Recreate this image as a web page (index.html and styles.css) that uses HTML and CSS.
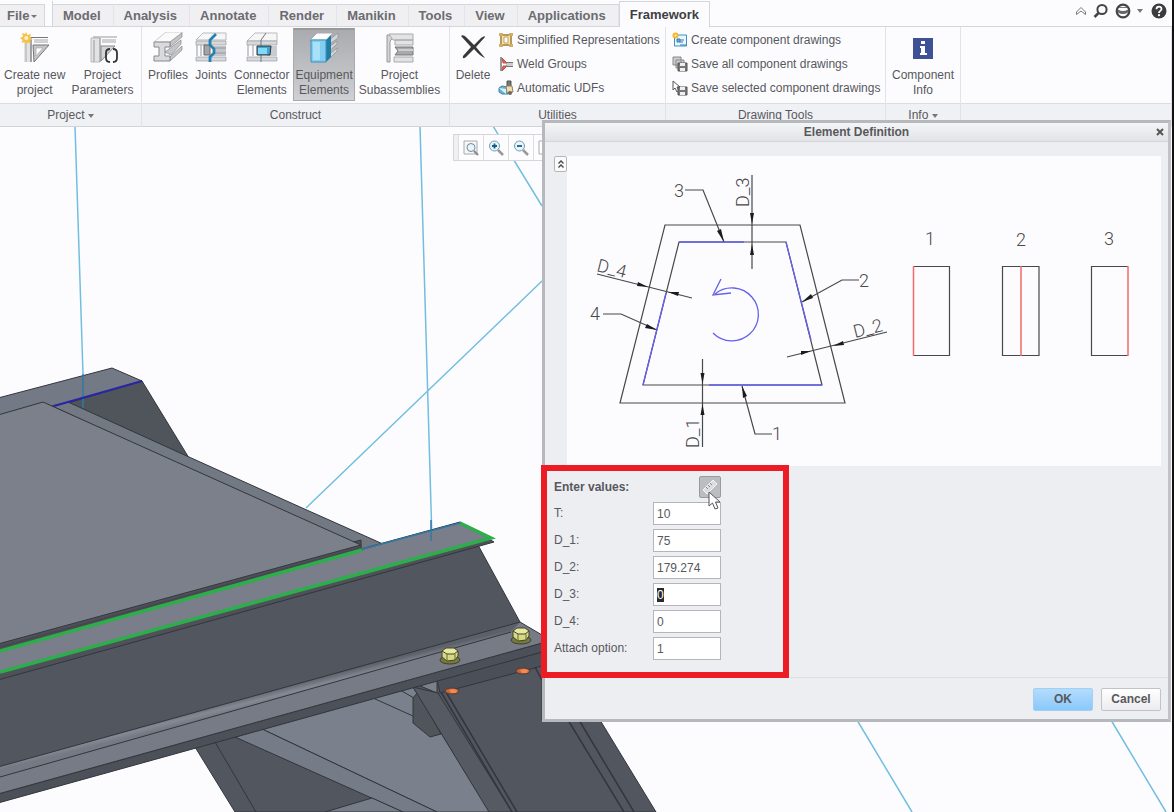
FILE: index.html
```html
<!DOCTYPE html>
<html lang="en">
<head>
<meta charset="utf-8">
<title>Framework - Element Definition</title>
<link rel="stylesheet" href="styles.css">
</head>
<body>
<header class="ribbon">
  <div class="tabbar">
    <button class="file-tab">File <span class="caret"></span></button>
    <nav class="tabs">
      <button class="tab">Model</button>
      <button class="tab">Analysis</button>
      <button class="tab">Annotate</button>
      <button class="tab">Render</button>
      <button class="tab">Manikin</button>
      <button class="tab">Tools</button>
      <button class="tab">View</button>
      <button class="tab">Applications</button>
      <button class="tab active">Framework</button>
    </nav>
    <div class="quick">
      <button class="plain" aria-label="Minimize ribbon"><svg width="12" height="10" viewBox="0 0 12 10"><path d="M1.500 6 6 1.500 10.500 6V8.500L6 5 1.500 8.500Z" fill="#fff" stroke="#777"/></svg></button>
      <button class="plain" aria-label="Search"><svg width="16" height="16" viewBox="0 0 16 16"><circle cx="9" cy="6.500" r="4.600" fill="none" stroke="#444" stroke-width="2"/><path d="M5.500 10 1.500 14" stroke="#444" stroke-width="2.500"/></svg></button>
      <button class="plain" aria-label="Learning connector"><svg width="16" height="16" viewBox="0 0 16 16"><circle cx="8" cy="8" r="6.300" fill="#fff" stroke="#444" stroke-width="2.200"/><path d="M3 6.500q5 3 10 0v3q-5 3-10 0z" fill="#666"/><path d="M4 4.500h8" stroke="#777"/></svg></button>
      <span class="caret"></span>
      <button class="plain help" aria-label="Help"><svg width="16" height="16" viewBox="0 0 16 16"><circle cx="8" cy="8" r="7.500" fill="#3c3c3e"/><path d="M5.500 6.200C5.500 2.800 10.600 3 10.500 6 10.500 8 8 7.800 8 10" fill="none" stroke="#fff" stroke-width="1.800"/><circle cx="8" cy="12.200" r="1.100" fill="#fff"/></svg></button>
    </div>
  </div>

  <div class="groups">
    <section class="group">
      <div class="tools project">
        <button class="tool"><svg class="ico" viewBox="0 0 32 32"><path d="M5 7h7v23H5z" fill="#e2e3e5"/><path d="M7 7v23M12 7v23" stroke="#aaa"/><path d="M12 5v25M12 5.500h17" stroke="#777" fill="none"/><path d="M15 7h14v4H15z" fill="#d0d1d4"/><path d="M14 13h16L15 30z" fill="#c4c5c8" stroke="#777"/><path d="M17 16v8l7-8z" fill="#fff" stroke="#aaa" stroke-width=".7"/><path d="m7 0 1.500 3L12 2l-1 3.500 3 1.500-3 1.500 1 3-3.500-1L7 13l-1.500-3-3 1 1-3L1 6l3-1.500L3 1l3 1z" fill="#f6c14d"/><circle cx="7.300" cy="6" r="2" fill="#fff4c8"/></svg><span>Create new<br>project</span></button>
        <button class="tool"><svg class="ico" viewBox="0 0 32 32"><path d="M5 6h9v24H5z" fill="#e2e3e5" stroke="#bbb"/><path d="M7 5h24M14 6v24M8 8v22" stroke="#999"/><path d="M16 7h14v4H16z" fill="#d0d1d4"/><path d="M15 14h14L15 29z" fill="#d4d5d8" stroke="#888"/><path d="M24 17q-4 0-4 4v5q0 4 4 4M27 17q4 0 4 4v5q0 4-4 4" fill="none" stroke="#333" stroke-width="1.800"/></svg><span>Project<br>Parameters</span></button>
      </div>
      <h2>Project <span class="caret"></span></h2>
    </section>

    <section class="group">
      <div class="tools construct">
        <button class="tool"><svg class="ico" viewBox="0 0 32 32"><path d="M2 10 14 0h17L18 10z" fill="#fafafa" stroke="#ccc"/><path d="m18 10 12-9v4L18 15zM13 20 29 8v4L19 23zM18 25 30 14v4L18 29z" fill="#c3c5c9" stroke="#888" stroke-width=".7"/><path d="M2 10h16v5h-5v9h5v5H2v-5h5v-9H2z" fill="#d9dadd" stroke="#888"/></svg><span>Profiles</span></button>
        <button class="tool"><svg class="ico" viewBox="0 0 32 32"><path d="M1 8 8 1h23v7z" fill="#f6f6f6" stroke="#bbb"/><path d="M1 9h30v4H1zM1 25h30v4H1z" fill="#d6d8dc" stroke="#9a9da2" stroke-width=".7"/><path d="M18 14h13v10H18z" fill="#c2c5ca"/><path d="M18 16h13M18 21h13M6 13v11M2 13v11" stroke="#999"/><path d="M9 13h6v10H9z" fill="#a3a5a8" stroke="#666"/><path d="m21 2-6 6v5l4 4v4l-4 4v5" fill="none" stroke="#2382b2" stroke-width="2.800"/></svg><span>Joints</span></button>
        <button class="tool"><svg class="ico" viewBox="0 0 32 32"><path d="m1 9 8-8h22v8z" fill="#f6f6f6" stroke="#bbb"/><path d="M1 9h30v4H1zM1 25h30v4H1z" fill="#d6d8dc" stroke="#9a9da2" stroke-width=".7"/><path d="M21 14h10v10H21z" fill="#c9cbd0"/><path d="M2 13v11M7 13v11" stroke="#999"/><path d="m20 1-5 7v22" fill="none" stroke="#777"/><path d="M11 14h14l-1 9H11z" fill="#40a2d0" stroke="#333"/><path d="M12 16h9v6h-9z" fill="#80d8fa"/></svg><span>Connector<br>Elements</span></button>
        <button class="tool selected"><svg class="ico" viewBox="0 0 32 32"><path d="m16 12 14-11v5L19 14zM17 18 29 9v3L18 22zM18 25l11-9v3L19 29z" fill="#d2d4d7" stroke="#888" stroke-width=".6"/><path d="m2 8 7-7h16l-6 7z" fill="#fff" stroke="#aaa"/><path d="m18 8 5-5v22l-5 5z" fill="#217ca4"/><path d="M3 8h15v22H3z" fill="#84cdf0" stroke="#3793bb"/><path d="M5 10h7v18H5z" fill="#a8e0fa"/></svg><span>Equipment<br>Elements</span></button>
        <button class="tool"><svg class="ico" viewBox="0 0 32 32"><path d="M4 3h9L7 9v21H4z" fill="#d4d5d8" stroke="#999"/><path d="M6 2h24v6H10zM12 8h18v5H12zM11 25h19v5H11z" fill="#e2e3e5" stroke="#aaa"/><path d="M12 15h18v8H12l3-4z" fill="#a8a9ac" stroke="#777"/><path d="M15 17h15v2H15z" fill="#cdced0"/></svg><span>Project<br>Subassemblies</span></button>
      </div>
      <h2>Construct</h2>
    </section>

    <section class="group">
      <div class="tools">
        <button class="tool"><svg class="ico" viewBox="0 0 32 32"><path d="M4 4q2-2 5 1l8 8 7-7q4-3 4-1l-9 10 9 11q-4-1-11-9l-8 8q-4 3-3-1l8-9z" fill="#37373a"/></svg><span>Delete</span></button>
        <div class="list">
          <button class="row"><svg class="sm" viewBox="0 0 16 16"><path d="M3 3h10v10H3z" fill="#f8e5ae" stroke="#b99a55" stroke-width="2"/><path d="M1 1h4v3H1zM11 1h4v3h-4zM1 12h4v3H1zM11 12h4v3h-4z" fill="#cdb06c"/><path d="M6 5h4v6H6z" fill="#fff" stroke="#bda066"/></svg>Simplified Representations</button>
          <button class="row"><svg class="sm" viewBox="0 0 16 16"><path d="M3 1v14" stroke="#999" stroke-width="2"/><path d="M8 6.500h7M8 10.500h7" stroke="#777"/><path d="M8 7h7v3H8z" fill="#ccc"/><path d="m4 2 5 5H5zM4 15l5-5H5z" fill="#e55f55" stroke="#b55"/></svg>Weld Groups</button>
          <button class="row"><svg class="sm" viewBox="0 0 16 16"><path d="m1 8 3-2 6 1v7H4L1 12z" fill="#66b5df" stroke="#477d9d"/><path d="m1 8 7 1v5" fill="#d8f1fc"/><path d="M9 1h4v6H9z" fill="#777" stroke="#555"/><path d="M8 6h6l1 6-6 1z" fill="#f3dda6" stroke="#8d8166"/><circle cx="12" cy="13" r="2" fill="#666"/></svg>Automatic UDFs</button>
        </div>
      </div>
      <h2>Utilities</h2>
    </section>

    <section class="group">
      <div class="tools">
        <div class="list">
          <button class="row"><svg class="sm" viewBox="0 0 16 16"><path d="M2.500 3h12v11h-12z" fill="#e9f6fd" stroke="#3e90c2"/><path d="M5 7h3v3H5zM8 8h4M8 10h3" fill="#69afd7" stroke="#357ea9"/><path d="M8 13h6" stroke="#357ea9"/><circle cx="3.500" cy="3.500" r="3" fill="#f6b62e"/><circle cx="3.500" cy="3.500" r="1" fill="#fff1b8"/></svg>Create component drawings</button>
          <button class="row"><svg class="sm" viewBox="0 0 16 16"><path d="M1 1h8v8H1zM4 4h8v8H4z" fill="#ccc" stroke="#888"/><path d="M6 7h9v8H6z" fill="#777" stroke="#555"/><path d="M8 7h5v3H8zM8 12h5v3H8z" fill="#eee"/></svg>Save all component drawings</button>
          <button class="row"><svg class="sm" viewBox="0 0 16 16"><path d="M1 1v9l2-2 2 4 2-1-2-4h3z" fill="#fff" stroke="#555"/><path d="M6 7h9v8H6z" fill="#777" stroke="#555"/><path d="M8 7h5v3H8zM8 12h5v3H8z" fill="#eee"/></svg>Save selected component drawings</button>
        </div>
      </div>
      <h2>Drawing Tools</h2>
    </section>

    <section class="group">
      <div class="tools centered">
        <button class="tool"><svg class="ico" viewBox="0 0 32 32"><path d="M6 6h20v21H6z" fill="#3e5196"/><path d="M14 9h4v3h-4zM13 14h5v7h2v2h-7v-2h1v-5h-1z" fill="#fff"/></svg><span>Component<br>Info</span></button>
      </div>
      <h2>Info <span class="caret"></span></h2>
    </section>
    <section class="group"><div class="tools"></div><h2></h2></section>
  </div>
</header>

<main class="workspace">
  <svg class="scene" viewBox="0 127 1174 685" preserveAspectRatio="xMinYMin slice" role="img" aria-label="Steel frame model">
    <defs>
      <linearGradient id="fillet" gradientUnits="userSpaceOnUse" x1="280" y1="687" x2="283" y2="699"><stop offset="0" stop-color="#5c6068"/><stop offset=".6" stop-color="#858994"/><stop offset="1" stop-color="#747983"/></linearGradient>
      <g id="bolt"><ellipse cx="0" cy="6" rx="10" ry="4" fill="#77793c" stroke="#40422a"/><path d="M-8-3v6l5 4 8-1 3-4v-5z" fill="#d8d985" stroke="#44452b"/><path d="m-8-3 4-3 8 0 4 3-4 3h-7z" fill="#e8e9a1" stroke="#44452b"/><path d="M-3 0v7M5 0v6" stroke="#66673b"/></g>
      <g id="nut"><ellipse rx="7" ry="3" fill="#c86637" stroke="#553c35"/><path d="M-3-1 1-2l4 1-1 3h-5z" fill="#f38a55"/></g>
    </defs>
    <g stroke="#72bedf" stroke-width="1.500" fill="none">
      <path d="M75 126 83 374M420 126 432 541M493 126 542 206M306 508 542 281M857 720 912 812M1111 720 1166 812"/>
    </g>
    <g stroke="#33363c" stroke-width="1">
      <path d="M195 747 542 650V720H600L656 812H235z" fill="#52565e"/>
      <path d="M215 742 256 812" fill="none"/>
      <path d="M262 729 413 687 490 812H437z" fill="#7a818c"/>
      <path d="M235 737 262 729 437 812H403z" fill="#757c87"/>
      <path d="M372 798 403 812H325z" fill="#767d88"/>
      <path d="M373 698 413 716M400 690 414 698" fill="none"/>
      <path d="M418 685 437 680V693z" fill="#7a818c"/>
      <path d="M413 698 413 723 430 737 441 734 418 692z" fill="#50545b"/>
      <path d="M413 687 438 693 512 812H489z" fill="#565b63"/>
      <path d="M437 680 542 652V666L440 693z" fill="#4b4f57"/>
      <path d="M441 692 512 812M446 692 517 812M535 667 542 680M568 720 624 812M579 720 634 812" fill="none" stroke-width="1.500"/>
      <path d="M-2 794 542 643V652L-2 803z" fill="#4c5058"/>
      <path d="M-2 767 520 622 542 635V643L-2 794z" fill="#767b85"/>
      <path d="M0 766 520 622 511 632 0 777z" fill="url(#fillet)" stroke="none"/>
      <path d="M0 777 511 632" fill="none"/>
      <path d="M-2 674 478 545 520 622-2 767z" fill="#52565e"/>
      <path d="M-2 398 112 368 142 381 54 407-2 420z" fill="#737a85"/>
      <path d="M68 403 142 381 189 458z" fill="#50555b"/>
      <path d="M52 406 68 402 189 457 300 507 383 544 361 550z" fill="#737983"/>
      <path d="M-2 638 361 540V549L460 522 494 542-2 680z" fill="#4e5159"/>
      <path d="M0 650 362 550 460 523 491 538 0 672z" fill="#7a7e8a" stroke="none"/>
      <path d="M-2 415 43 402 361 545-2 644z" fill="#7b808b"/>
      <path d="M361 545V548L0 647" fill="none" stroke="#4a4650" stroke-width="2"/>
    </g>
    <path d="M83 374v34M431 520v21M362 549 460 523" stroke="#3178a3" stroke-width="1.500" fill="none"/>
    <path d="M54 406 142 381" stroke="#2926a5" stroke-width="2"/>
    <path d="M0 651 362 550M460 523 491 538 0 672" fill="none" stroke="#2cae4a" stroke-width="3.500"/>
    <use href="#bolt" x="450" y="654"/><use href="#bolt" x="521" y="634"/>
    <use href="#nut" x="452" y="691"/><use href="#nut" x="523" y="671"/>
  </svg>

  <div class="viewbar">
    <span class="grip"></span>
    <button aria-label="Refit"><svg width="16" height="16" viewBox="0 0 16 16"><path d="M1 1h13v13H1z" fill="#f6f6f6" stroke="#aaa"/><circle cx="8" cy="7.500" r="4" fill="#e8f5fa" stroke="#6f8c98"/><path d="m11 11 4 4" stroke="#888" stroke-width="2"/></svg></button>
    <button aria-label="Zoom in"><svg width="16" height="16" viewBox="0 0 16 16"><circle cx="6.500" cy="6" r="5" fill="#e8f5fa" stroke="#6f9cb0"/><path d="m10 10 5 5" stroke="#999" stroke-width="2.500"/><path d="M4 6h5M6.500 3.500v5" stroke="#155e8c" stroke-width="1.800"/></svg></button>
    <button aria-label="Zoom out"><svg width="16" height="16" viewBox="0 0 16 16"><circle cx="6.500" cy="6" r="5" fill="#e8f5fa" stroke="#6f9cb0"/><path d="m10 10 5 5" stroke="#999" stroke-width="2.500"/><path d="M4 6h5" stroke="#155e8c" stroke-width="1.800"/></svg></button>
    <button aria-label="Repaint"><svg width="16" height="16" viewBox="0 0 16 16"><path d="M1 1h13v13H1z" fill="#fff" stroke="#aaa"/></svg></button>
  </div>

  <form class="dialog" role="dialog" aria-labelledby="dialog-title">
    <div class="titlebar"><h1 id="dialog-title">Element Definition</h1><button type="button" class="close" aria-label="Close"><svg width="8" height="8" viewBox="0 0 8 8"><path d="M1 1l6 6M7 1 1 7" stroke="#555" stroke-width="2"/></svg></button></div>
    <div class="preview">
      <button type="button" class="collapse" aria-label="Collapse"><svg width="8" height="10" viewBox="0 0 8 10"><path d="m1.500 4.500 2.500-2.500 2.500 2.500M1.500 8.500 4 6l2.500 2.500" fill="none" stroke="#444" stroke-width="1.300"/></svg></button>
      <svg class="diagram" viewBox="567 156 594 310" role="img" aria-label="Plate offsets">
        <g fill="none" stroke="#48484a" stroke-width="1.200">
          <path d="M665 225H800L845 403H620zM679 242H786L822 385H643z"/>
          <path d="M685 190H703L724 242M752 175V269M859 280H842L802 302M887 332 787 357M597 274 692 298M603 314H621L657 330M702.500 359V447M772 434H755L742 386"/>
          <path d="M913 266.500H949.500V355.500H913M1002.500 266.500H1039V355.500H1002.500zM1128 266.500H1091.500V355.500H1128"/>
        </g>
        <g fill="none" stroke="#6260ed" stroke-width="1.300">
          <path d="M744 242H679M786 242 811 340M709 385H822M643 385 666 293"/>
          <path d="M713 333A26.500 26.500 0 1 0 715 294M721 279 713 295 731 293"/>
        </g>
        <path d="M913.500 266V356M1021 266V356M1128 266V356" stroke="#f26a6a" stroke-width="1.500"/>
        <g fill="#1c1c1e">
          <path d="M724 242 717 231 721 229zM752 224 750 213H754zM752 244 750 255H754zM802 302 811 294 813 298zM833 346 843 341 844 345zM811 351 801 351 801 355zM648 287 637 286 638 282zM668 292 679 292 678 296zM657 330 645 328 647 324zM702.500 384 700.500 373H704.500zM702.500 404 700.500 415H704.500zM742 386 743 398 747 396z"/>
        </g>
        <g class="marks">
          <text x="674" y="197">3</text><text x="859" y="287">2</text><text x="590" y="320">4</text><text x="772" y="440">1</text>
          <text x="925" y="245">1</text><text x="1016" y="246">2</text><text x="1104" y="245">3</text>
          <text transform="translate(749 207) rotate(-90)">D_3</text>
          <text transform="translate(699 448) rotate(-90)">D_1</text>
          <text transform="translate(596 271) rotate(14)">D_4</text>
          <text transform="translate(855 338) rotate(-14)">D_2</text>
        </g>
      </svg>
    </div>
    <div class="values">
      <strong>Enter values:</strong>
      <button type="button" class="measure" aria-label="Measure"><svg width="16" height="16" viewBox="0 0 16 16"><path d="M1 11 11 1l4 4L5 15z" fill="#ddd" stroke="#f4f4f4"/><path d="m4 8 2 2m0-4 2 2m0-4 2 2" stroke="#888"/></svg></button>
      <label for="t">T:</label><input id="t" value="10">
      <label for="d1">D_1:</label><input id="d1" value="75">
      <label for="d2">D_2:</label><input id="d2" value="179.274">
      <label for="d3">D_3:</label><input id="d3" value="0">
      <label for="d4">D_4:</label><input id="d4" value="0">
      <label for="attach">Attach option:</label><input id="attach" value="1">
      <svg class="pointer" width="14" height="20" viewBox="0 0 14 20"><path d="M1 1v14l3.500-3 2.500 6 3-1-2.500-6H12z" fill="#fff" stroke="#555"/></svg>
      <div class="highlight"></div>
    </div>
    <footer class="actions"><button type="button" class="btn primary">OK</button><button type="button" class="btn">Cancel</button></footer>
  </form>
</main>
<script src="script.js"></script>
</body>
</html>
```

FILE: styles.css
```css
* { box-sizing: border-box; }
body {
  margin: 0;
  min-height: 100vh;
  display: flex;
  flex-direction: column;
  background: #fcfcff;
  border-right: 2px solid #111;
  color: #58585c;
  font: 12px/15px "Liberation Sans", Arial, sans-serif;
}
button, input { font: inherit; color: inherit; }
button { margin: 0; padding: 0; border: 0; background: none; }
h1, h2 { margin: 0; font-size: 12px; line-height: 15px; }
svg { display: block; flex: none; }
.caret {
  display: inline-block;
  border: 3px solid transparent;
  border-top: 4px solid #777;
  border-bottom: 0;
  vertical-align: middle;
}

.tabbar { display: flex; align-items: flex-end; height: 27px; border-bottom: 1px solid #d5d6da; }
.file-tab, .tab { font-size: 13px; font-weight: bold; height: 22px; color: #6b6b70; background: #f0f0f3; border-top: 1px solid #d5d6da; }
.file-tab { width: 45px; margin-right: 7px; border-right: 1px solid #d5d6da; white-space: nowrap; }
.file-tab .caret { border-width: 3px 3px 0; margin-left: -2px; }
.tabs { display: flex; align-items: flex-end; border-left: 1px solid #d5d6da; }
.tab { padding: 0 12px 0 10px; border-right: 1px solid #e4e4e8; }
.tab.active { height: 26px; margin-bottom: -1px; color: #3f3f42; background: #fcfcff; border: 1px solid #d5d6da; border-bottom: 0; padding: 0 10px; }
.quick { margin-left: auto; display: flex; align-items: center; align-self: flex-start; gap: 6px; padding: 3px 5px 0 0; }
.help { margin-left: 2px; }

.groups { display: grid; grid-template-columns: 142px 308px 216px 220px 75px 1fr; }
.group { display: flex; flex-direction: column; border-right: 1px solid #e2e3e7; min-width: 0; }
.tools { display: flex; flex: 1 0 76px; padding: 1px 0 2px 4px; gap: 4px; }
.project { gap: 6px; }
.construct { padding-left: 6px; }
.centered { justify-content: center; padding-left: 0; }
.group h2 { height: 24px; line-height: 22px; text-align: center; font-weight: normal; background: #f0f1f4; border-top: 1px solid #dcdde1; border-bottom: 1px solid #d2d3d7; }
.tool { display: flex; flex-direction: column; align-items: center; gap: 4px; padding-top: 4px; white-space: nowrap; flex: none; min-width: 38px; }
.tool.selected { background: linear-gradient(#aaabae, #cfd0d3); border: 1px solid #aaa; border-top: 2px solid #999; padding: 2px 1px 0; }
.ico { width: 32px; height: 32px; }
.list { display: flex; flex-direction: column; gap: 8px; padding-top: 4px; margin-left: 2px; }
.row { display: flex; align-items: center; gap: 3px; height: 16px; white-space: nowrap; }
.sm { width: 16px; height: 16px; }

.workspace { position: relative; flex: 1; min-height: 600px; }
.scene { position: absolute; inset: 0; width: 100%; height: 100%; }
.viewbar { position: absolute; left: 453px; top: 7px; display: flex; border: 1px solid #d5d5da; background: #fdfdff; }
.viewbar button { width: 25px; height: 25px; display: grid; place-items: center; border-left: 1px solid #ddd; }
.grip { width: 4px; background: #f0f0f3; }

.dialog {
  position: absolute;
  top: -7px;
  right: 1px;
  width: 629px;
  background: #edeef2;
  border: 3px solid #b7b8bd;
  border-right-color: #c2c3c8;
}
.titlebar { display: flex; align-items: center; height: 19px; background: linear-gradient(#f4f5f7, #e1e3e6); border-bottom: 1px solid #d4d5d9; }
.titlebar h1 { flex: 1; text-align: center; padding-left: 16px; }
.close { width: 16px; height: 16px; display: grid; place-items: center; }
.preview { display: flex; align-items: flex-start; padding: 14px 7px 0 9px; }
.collapse { width: 13px; height: 16px; display: grid; place-items: center; background: #fafafa; border: 1px solid #b5b6ba; border-radius: 2px; }
.diagram { flex: 1; min-width: 0; background: #fcfcff; }
.marks { font: 300 18px Roboto, sans-serif; fill: #48484a; }
.values { position: relative; display: grid; grid-template-columns: 99px 68px; gap: 4px 0; align-items: center; padding: 10px 9px 17px; }
.measure { width: 22px; height: 22px; display: grid; place-items: center; justify-self: end; background: #bcbdc1; border: 1px solid #999a9e; border-radius: 2px; }
.values input { width: 100%; height: 23px; padding: 0 3px; background: #fff; border: 1px solid #b4b5ba; outline: 0; }
.values input::selection { background: #2b2b2e; color: #fff; }
.pointer { position: absolute; left: 163px; top: 25px; }
.highlight { position: absolute; left: -4px; top: -1px; width: 248px; bottom: -1px; border: 6px solid #ed1c24; }
.actions { display: flex; justify-content: flex-end; gap: 8px; padding: 10px 7px 8px; border-top: 1px solid #dddee2; }
.btn { width: 60px; height: 23px; font-weight: bold; background: linear-gradient(#fff, #ececf0); border: 1px solid #c2c3c8; border-radius: 2px; }
.btn.primary { background: linear-gradient(#b4dcfc, #8ac8fc); border-color: #a3d0f2; }
```

FILE: script.js
```js
const field = document.getElementById("d3");
field.focus();
field.select();
```
